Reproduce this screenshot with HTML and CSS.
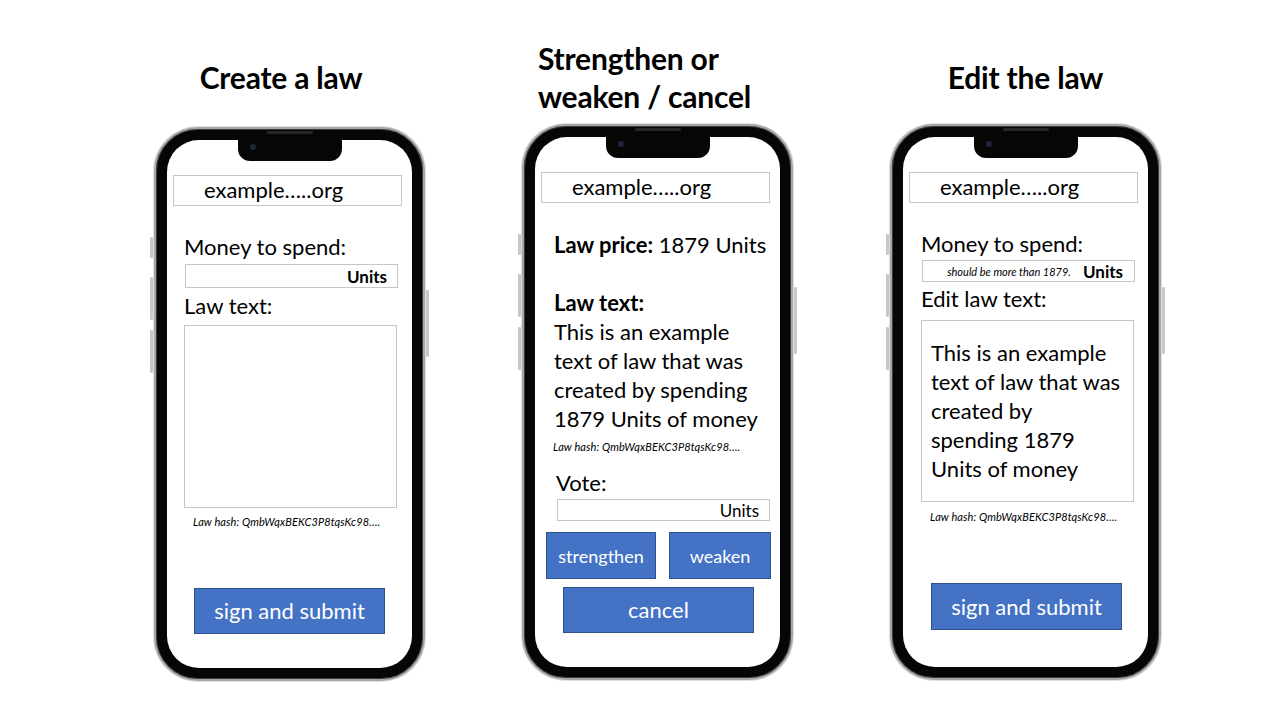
FILE: index.html
```html
<!DOCTYPE html>
<html lang="en">
<head>
<meta charset="utf-8">
<title>Law app mockups</title>
<link rel="stylesheet" href="styles.css">
</head>
<body>
<main class="stage">
  <section class="col">
    <header class="title-area title-area--first"><h1 class="title">Create a law</h1></header>
    <div class="phone phone--low">
      <span class="side side--silent"></span>
      <span class="side side--volup"></span>
      <span class="side side--voldown"></span>
      <span class="side side--power"></span>
      <span class="speaker"></span>
      <div class="screen">
        <div class="notch"><span class="cam"></span></div>
        <div class="url">example…..org</div>
        <div class="label label--money">Money to spend:</div>
        <div class="field field--bold">Units</div>
        <div class="label label--after">Law text:</div>
        <div class="area"></div>
        <div class="hash hash--area">Law hash: QmbWqxBEKC3P8tqsKc98….</div>
        <button class="btn btn--submit">sign and submit</button>
      </div>
    </div>
  </section>

  <section class="col">
    <header class="title-area title-area--left"><h1 class="title">Strengthen or<br>weaken / cancel</h1></header>
    <div class="phone">
      <span class="side side--silent"></span>
      <span class="side side--volup"></span>
      <span class="side side--voldown"></span>
      <span class="side side--power"></span>
      <span class="speaker"></span>
      <div class="screen">
        <div class="notch"><span class="cam"></span></div>
        <div class="url">example…..org</div>
        <div class="desc">
          <p class="desc-line"><b>Law price:</b> 1879 Units</p>
          <p class="desc-line desc-line--gap"><b>Law text:</b><br>This is an example<br>text of law that was<br>created by spending<br>1879 Units of money</p>
        </div>
        <div class="hash hash--desc">Law hash: QmbWqxBEKC3P8tqsKc98….</div>
        <div class="label label--vote">Vote:</div>
        <div class="field field--vote">Units</div>
        <div class="vote-row">
          <button class="btn btn--small btn--strengthen">strengthen</button>
          <button class="btn btn--small btn--weaken">weaken</button>
        </div>
        <button class="btn btn--cancel">cancel</button>
      </div>
    </div>
  </section>

  <section class="col">
    <header class="title-area"><h1 class="title">Edit the law</h1></header>
    <div class="phone">
      <span class="side side--silent"></span>
      <span class="side side--volup"></span>
      <span class="side side--voldown"></span>
      <span class="side side--power"></span>
      <span class="speaker"></span>
      <div class="screen">
        <div class="notch"><span class="cam"></span></div>
        <div class="url">example…..org</div>
        <div class="label label--money label--money3">Money to spend:</div>
        <div class="field field--hint"><i class="hint">should be more than 1879.</i><b>Units</b></div>
        <div class="label label--after label--after3">Edit law text:</div>
        <div class="area area--text">This is an example<br>text of law that was<br>created by<br>spending 1879<br>Units of money</div>
        <div class="hash hash--area hash--area3">Law hash: QmbWqxBEKC3P8tqsKc98….</div>
        <button class="btn btn--submit btn--submit3">sign and submit</button>
      </div>
    </div>
  </section>
</main>
</body>
</html>
```

FILE: styles.css
```css
* { box-sizing: border-box; }

html, body {
  margin: 0;
  background: #ffffff;
}

body {
  font-family: Lato, "Open Sans", "Liberation Sans", sans-serif;
  color: #000;
}

.stage {
  width: 1280px;
  height: 720px;
  display: flex;
  gap: 97px;
  padding-left: 154px;
}

.col {
  width: 271px;
  display: flex;
  flex-direction: column;
}

.title-area {
  height: 124px;
  padding-top: 30px;
  display: flex;
  align-items: center;
  justify-content: center;
}

.title-area--first {
  padding-right: 17px;
}

.title-area--left {
  justify-content: flex-start;
  padding-left: 16px;
}

.title {
  margin: 0;
  font-size: 30px;
  font-weight: 700;
  line-height: 38px;
  letter-spacing: -0.2px;
}

/* phone frame */
.phone {
  position: relative;
  height: 556px;
  background: #060606;
  border: 2px solid #a6a6a6;
  border-radius: 44px;
  padding: 11px;
  box-shadow: inset 0 0 0 1px #3c3c3c, 0 0 0 1px #dedede;
}

.phone--low {
  margin-top: 3px;
  height: 554px;
}

.side {
  position: absolute;
  width: 3px;
  background: #c8c8c8;
  border-radius: 1px;
}
.side--silent { left: -6px; top: 108px; height: 21px; }
.side--volup { left: -6px; top: 148px; height: 43px; }
.side--voldown { left: -6px; top: 201px; height: 43px; }
.side--power { right: -6px; top: 161px; height: 67px; }

.speaker {
  position: absolute;
  top: 2px;
  left: 50%;
  width: 46px;
  height: 3px;
  margin-left: -23px;
  border-radius: 2px;
  background: #262626;
}

.screen {
  position: relative;
  height: 100%;
  background: #ffffff;
  border-radius: 32px;
  display: flex;
  flex-direction: column;
  align-items: flex-start;
  padding-top: 35px;
}

.notch {
  position: absolute;
  top: 0;
  left: 50%;
  width: 104px;
  height: 21px;
  margin-left: -52px;
  background: #060606;
  border-radius: 0 0 12px 12px;
}

.cam {
  position: absolute;
  left: 12px;
  top: 4px;
  width: 6px;
  height: 6px;
  border-radius: 50%;
  background: #1d2838;
}

.url {
  margin-left: 6px;
  width: 229px;
  height: 31px;
  border: 1px solid #c6c6c6;
  padding-left: 30px;
  font-size: 22px;
  line-height: 28px;
}

.label {
  margin-left: 17px;
  font-size: 22px;
  line-height: 29px;
}

.label--money { margin-top: 26px; }
.label--money3 { margin-left: 18px; }
.label--after { margin-top: 3px; }
.label--after3 { margin-left: 18px; margin-top: 2px; }
.label--vote { margin-left: 21px; margin-top: 14px; }

.field {
  margin-left: 18px;
  width: 213px;
  height: 24px;
  margin-top: 3px;
  border: 1px solid #c6c6c6;
  display: flex;
  align-items: center;
  justify-content: flex-end;
  padding-right: 10px;
  font-size: 17px;
}

.field--bold { font-weight: 700; }

.field--vote {
  margin-left: 22px;
  margin-top: 2px;
  height: 22px;
}

.field--hint {
  margin-left: 19px;
  margin-top: 2px;
  height: 22px;
  gap: 12px;
  padding-right: 11px;
}

.field--hint b { font-weight: 700; }

.hint {
  font-size: 11px;
  font-style: italic;
}

.area {
  margin-left: 17px;
  margin-top: 5px;
  width: 213px;
  height: 183px;
  border: 1px solid #c6c6c6;
}

.area--text {
  margin-left: 18px;
  margin-top: 7px;
  height: 182px;
  padding: 17px 0 0 9px;
  font-size: 22px;
  line-height: 29px;
}

.hash {
  font-size: 11px;
  font-style: italic;
  line-height: 14px;
  white-space: nowrap;
  letter-spacing: 0.1px;
}

.hash--area { margin-left: 26px; margin-top: 7px; }
.hash--area3 { margin-left: 27px; margin-top: 8px; }
.hash--desc { margin-left: 18px; margin-top: 7px; }

.desc {
  margin-left: 19px;
  margin-top: 27px;
  font-size: 22px;
  line-height: 29px;
}

.desc-line { margin: 0; }
.desc-line--gap { margin-top: 29px; }
.desc b { font-weight: 700; }

.btn {
  font-family: Lato, "Open Sans", "Liberation Sans", sans-serif;
  background: #4472c4;
  border: 1px solid #2f528f;
  color: #ffffff;
  padding: 0;
  font-size: 22px;
  line-height: 1;
  border-radius: 0;
  display: flex;
  align-items: center;
  justify-content: center;
}

.btn--submit {
  margin-left: 27px;
  margin-top: 59px;
  width: 191px;
  height: 46px;
}

.btn--submit3 { margin-left: 28px; margin-top: 59px; height: 47px; }

.vote-row {
  margin-left: 11px;
  margin-top: 11px;
  display: flex;
  gap: 13px;
}

.btn--small {
  height: 47px;
  font-size: 18px;
}

.btn--strengthen { width: 110px; }
.btn--weaken { width: 102px; }

.btn--cancel {
  margin-left: 28px;
  margin-top: 8px;
  width: 191px;
  height: 46px;
}
```
